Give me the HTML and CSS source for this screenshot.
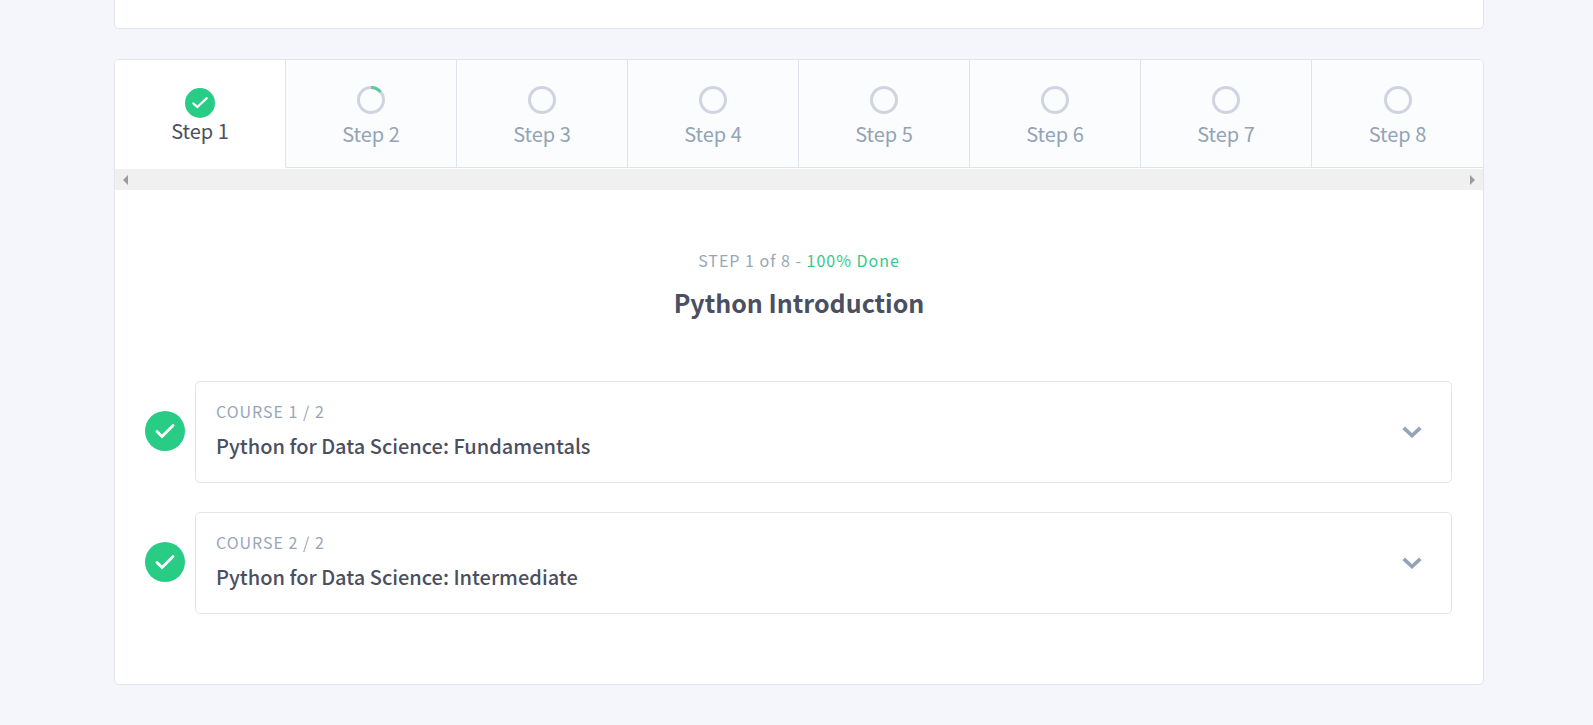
FILE: index.html
```
<!DOCTYPE html>
<html lang="en">
<head>
<meta charset="utf-8">
<meta name="viewport" content="width=device-width, initial-scale=1">
<title>Python Introduction</title>
<link rel="stylesheet" href="styles.css">
</head>
<body>
<main class="page">
  <section class="panel panel-previous"></section>
  <section class="panel">
    <div class="steps" role="tablist" aria-label="Path steps">
      <button class="step step-active" role="tab" aria-selected="true">
        <svg class="badge badge-small" viewBox="0 0 40 40" aria-hidden="true"><circle cx="20" cy="20" r="20"/><path d="M11 20.500l5.500 5L29 13.500"/></svg>
        <span>Step 1</span>
      </button>
      <button class="step" role="tab" aria-selected="false">
        <svg class="ring" viewBox="0 0 28 28" aria-hidden="true"><circle cx="14" cy="14" r="12.500"/><path d="M14 1.500A12.500 12.500 0 0 1 23.600 6"/></svg>
        <span>Step 2</span>
      </button>
      <button class="step" role="tab" aria-selected="false">
        <svg class="ring" viewBox="0 0 28 28" aria-hidden="true"><circle cx="14" cy="14" r="12.500"/></svg>
        <span>Step 3</span>
      </button>
      <button class="step" role="tab" aria-selected="false">
        <svg class="ring" viewBox="0 0 28 28" aria-hidden="true"><circle cx="14" cy="14" r="12.500"/></svg>
        <span>Step 4</span>
      </button>
      <button class="step" role="tab" aria-selected="false">
        <svg class="ring" viewBox="0 0 28 28" aria-hidden="true"><circle cx="14" cy="14" r="12.500"/></svg>
        <span>Step 5</span>
      </button>
      <button class="step" role="tab" aria-selected="false">
        <svg class="ring" viewBox="0 0 28 28" aria-hidden="true"><circle cx="14" cy="14" r="12.500"/></svg>
        <span>Step 6</span>
      </button>
      <button class="step" role="tab" aria-selected="false">
        <svg class="ring" viewBox="0 0 28 28" aria-hidden="true"><circle cx="14" cy="14" r="12.500"/></svg>
        <span>Step 7</span>
      </button>
      <button class="step" role="tab" aria-selected="false">
        <svg class="ring" viewBox="0 0 28 28" aria-hidden="true"><circle cx="14" cy="14" r="12.500"/></svg>
        <span>Step 8</span>
      </button>
    </div>
    <div class="scroller">
      <button class="scroll-button" aria-label="Scroll left"><svg class="arrow" viewBox="0 0 5 10" aria-hidden="true"><path d="M5 0v10L0 5z"/></svg></button>
      <button class="scroll-button" aria-label="Scroll right"><svg class="arrow" viewBox="0 0 5 10" aria-hidden="true"><path d="M0 0v10l5-5z"/></svg></button>
    </div>
    <header class="intro">
      <p class="label">STEP 1 of 8 - <span class="done">100% Done</span></p>
      <h1 class="title">Python Introduction</h1>
    </header>
    <ul class="courses">
      <li class="course">
        <svg class="badge" viewBox="0 0 40 40" role="img" aria-label="Completed"><circle cx="20" cy="20" r="20"/><path d="M12 20.500l5 5L28 14.500"/></svg>
        <button class="course-card" aria-expanded="false">
          <span class="course-text">
            <span class="label">COURSE 1 / 2</span>
            <span class="course-name">Python for Data Science: Fundamentals</span>
          </span>
          <svg class="chevron" viewBox="0 0 20 12" aria-hidden="true"><path d="M1.700 1.900L10 9.600l8.300-7.700"/></svg>
        </button>
      </li>
      <li class="course">
        <svg class="badge" viewBox="0 0 40 40" role="img" aria-label="Completed"><circle cx="20" cy="20" r="20"/><path d="M12 20.500l5 5L28 14.500"/></svg>
        <button class="course-card" aria-expanded="false">
          <span class="course-text">
            <span class="label">COURSE 2 / 2</span>
            <span class="course-name">Python for Data Science: Intermediate</span>
          </span>
          <svg class="chevron" viewBox="0 0 20 12" aria-hidden="true"><path d="M1.700 1.900L10 9.600l8.300-7.700"/></svg>
        </button>
      </li>
    </ul>
  </section>
</main>
</body>
</html>
```
FILE: styles.css
```
* {
  box-sizing: border-box;
}

body {
  margin: 0;
  background: #f4f6fc;
  color: #4b4f5f;
  font-family: "Noto Sans CJK SC", "Noto Sans", sans-serif;
}

button {
  margin: 0;
  border: 0;
  background: none;
  color: inherit;
  font: inherit;
  cursor: pointer;
}

svg {
  display: block;
  flex: none;
  fill: none;
}

.page {
  display: flex;
  flex-direction: column;
  gap: 30px;
  padding: 0 109px 40px 114px;
}

.panel {
  overflow: hidden;
  border: 1px solid #e2e4ed;
  border-radius: 5px;
  background: #fff;
}

.panel-previous {
  padding-top: 28px;
  border-top: 0;
  border-top-left-radius: 0;
  border-top-right-radius: 0;
}

.steps {
  display: grid;
  grid-template-columns: repeat(8, 1fr);
}

.step {
  display: flex;
  flex-direction: column;
  align-items: center;
  gap: 8px;
  padding: 26px 0 21px;
  border-right: 1px solid #dfe3ec;
  border-bottom: 1px solid #dfe3ec;
  background: #fafcfe;
  color: #94a3b5;
  font-size: 20px;
  line-height: 24px;
}

.step:last-child {
  border-right: 0;
}

.step-active {
  gap: 1px;
  padding-top: 28px;
  border-bottom-color: #fff;
  background: #fff;
  color: #4b4f5f;
}

.ring {
  width: 28px;
  height: 28px;
  stroke: #d0d4e1;
  stroke-width: 3;
}

.ring path {
  stroke: #5fcb9b;
}

.badge {
  width: 40px;
  height: 40px;
}

.badge-small {
  width: 30px;
  height: 30px;
}

.badge circle {
  fill: #29cc85;
}

.badge path {
  stroke: #fff;
  stroke-width: 2.8;
  stroke-linecap: round;
}

.scroller {
  display: flex;
  justify-content: space-between;
  margin-top: 1px;
  background: #f0f0f0;
}

.scroll-button {
  padding: 6px 8px 5px;
}

.arrow {
  width: 5px;
  height: 10px;
  fill: #9c9c9c;
}

.intro {
  display: flex;
  flex-direction: column;
  align-items: center;
  gap: 12px;
  padding: 58px 30px 61px;
}

.label {
  margin: 0;
  color: #98a6b8;
  font-size: 16px;
  line-height: 24px;
  letter-spacing: 1px;
}

.done {
  color: #35c98a;
}

.title {
  margin: 0;
  font-size: 25px;
  font-weight: 700;
  line-height: 36px;
}

.courses {
  display: flex;
  flex-direction: column;
  gap: 29px;
  margin: 0;
  padding: 0 31px 70px 30px;
  list-style: none;
}

.course {
  display: flex;
  align-items: center;
  gap: 10px;
}

.course .badge {
  margin-bottom: 2px;
}

.course-card {
  display: flex;
  flex: 1;
  align-items: center;
  justify-content: space-between;
  padding: 0 29px 0 20px;
  border: 1px solid #e2e5ea;
  border-radius: 5px;
  text-align: left;
}

.course-text {
  display: flex;
  flex-direction: column;
  gap: 8px;
  padding: 17px 0 21px;
}

.course-name {
  font-size: 20px;
  font-weight: 500;
  line-height: 30px;
}

.chevron {
  width: 20px;
  height: 12px;
  stroke: #94a3b5;
  stroke-width: 3.6;
}
```
